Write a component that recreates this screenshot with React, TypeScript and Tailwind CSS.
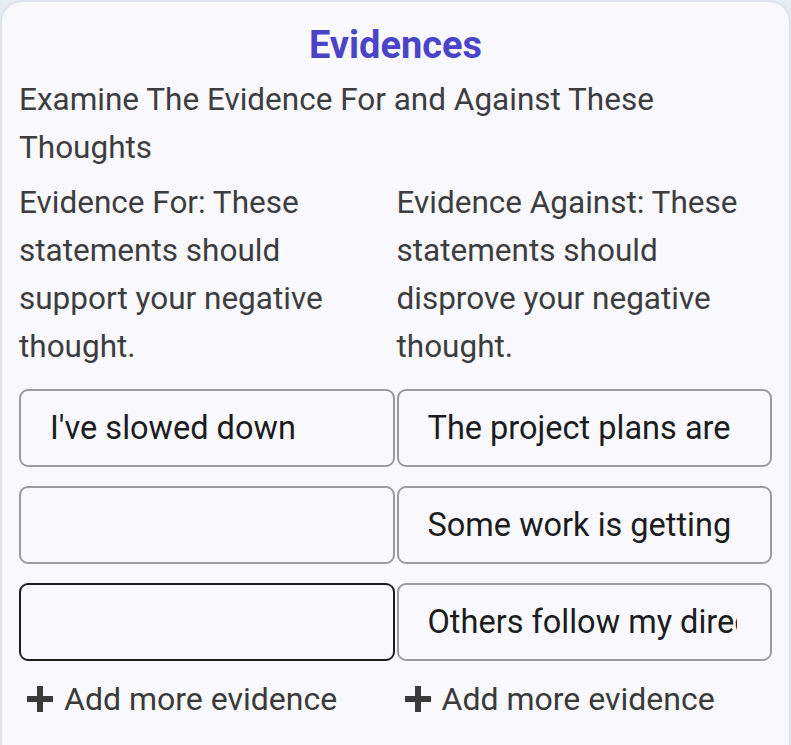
import { useState } from 'react';

const forItems = ["I've slowed down", '', ''];
const againstItems = ['The project plans are on track', 'Some work is getting done', 'Others follow my direction'];

function PlusIcon() {
  return (
    <svg width="28" height="28" viewBox="0 0 28 28" className="shrink-0">
      <rect x="11" y="1" width="6" height="26" fill="#3a3a3a" />
      <rect x="1" y="11" width="26" height="6" fill="#3a3a3a" />
    </svg>
  );
}

function EvidenceColumn({ label, items, focused }: { label: string; items: string[]; focused?: number }) {
  const [values, setValues] = useState(items);
  return (
    <div className="flex flex-col">
      <p className="text-[31.5px] leading-[48px] text-[#3d3d3f] pr-4">{label}</p>
      <div className="mt-[18px] flex flex-col gap-[19px]">
        {values.map((v, i) => (
          <input
            key={i}
            value={v}
            onChange={e => setValues(values.map((x, j) => (j === i ? e.target.value : x)))}
            className={`h-[78px] w-full rounded-[9px] border-2 bg-transparent pl-[29px] pr-[33px] text-[32.5px] text-[#1c1c1e] outline-none ${
              i === focused ? 'border-[#1e1e1e]' : 'border-[#9c9c9e]'
            }`}
          />
        ))}
      </div>
      <button className="mt-[19px] flex items-center gap-[10px] pl-[7px] text-[32px] leading-[38px] text-[#3a3a3a]">
        <PlusIcon />
        <span>Add more evidence</span>
      </button>
    </div>
  );
}

export default function App() {
  return (
    <div className="min-h-screen bg-[#e6ecf4]" style={{ fontFamily: 'Roboto, "Noto Sans", sans-serif' }}>
      <div className="min-h-[745px] rounded-t-[22px] border-2 border-b-0 border-[#dde4ee] bg-[#f8f8fd] px-[17px] pt-[20px]">
        <h2 className="text-center text-[38px] font-bold leading-[46px] text-[#4b44c9]">Evidences</h2>
        <p className="mt-[8px] text-[31.5px] leading-[48px] text-[#3d3d3f]">
          Examine The Evidence For and Against These Thoughts
        </p>
        <div className="mt-[7px] grid grid-cols-2 gap-[2px]">
          <EvidenceColumn
            label="Evidence For: These statements should support your negative thought."
            items={forItems}
            focused={2}
          />
          <EvidenceColumn
            label="Evidence Against: These statements should disprove your negative thought."
            items={againstItems}
          />
        </div>
      </div>
    </div>
  );
}
